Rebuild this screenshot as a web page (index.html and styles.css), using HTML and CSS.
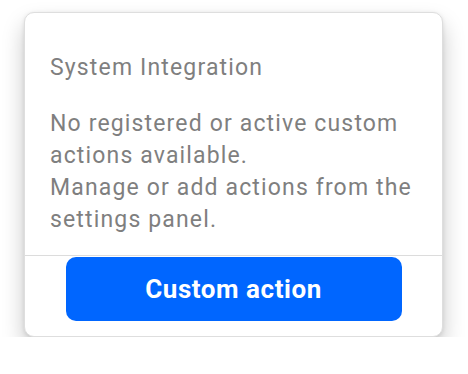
FILE: index.html
```html
<!DOCTYPE html>
<html>
<head>
<meta charset="utf-8">
<link rel="stylesheet" href="styles.css">
</head>
<body>
<div class="card">
  <div class="content">
    <h2 class="title">System Integration</h2>
    <p class="desc">No registered or active custom actions available.<br>Manage or add actions from the settings panel.</p>
  </div>
  <div class="footer">
    <button class="btn">Custom action</button>
  </div>
</div>
</body>
</html>
```
FILE: styles.css
```css
html, body {
  margin: 0;
  padding: 0;
  background: #ffffff;
}
body {
  padding: 12px 0 0 24px;
  font-family: Roboto, "Noto Sans", sans-serif;
}
.card {
  width: 419px;
  height: 325px;
  box-sizing: border-box;
  background: #ffffff;
  border-radius: 10px;
  border: 1px solid #dedede;
  box-shadow: 0 12px 22px rgba(0, 0, 0, 0.22), 0 1px 4px rgba(0, 0, 0, 0.1);
  display: flex;
  flex-direction: column;
  overflow: hidden;
}
.content {
  padding: 40px 25px 0 25px;
  height: 243px;
  box-sizing: border-box;
  border-bottom: 1px solid #dcdcdc;
}
.title {
  margin: 0;
  font-size: 23px;
  font-weight: 400;
  color: #7f7f7f;
  line-height: 30px;
  letter-spacing: 1.15px;
}
.desc {
  margin: 25px 0 0 0;
  font-size: 23px;
  line-height: 32px;
  color: #7f7f7f;
  letter-spacing: 1.15px;
}
.footer {
  display: flex;
  justify-content: center;
  padding-top: 1px;
}
.btn {
  width: 336px;
  height: 64px;
  border: none;
  border-radius: 10px;
  background: #0066ff;
  color: #ffffff;
  font-family: Roboto, "Noto Sans", sans-serif;
  font-size: 26px;
  font-weight: 700;
  letter-spacing: 0.55px;
}
```
